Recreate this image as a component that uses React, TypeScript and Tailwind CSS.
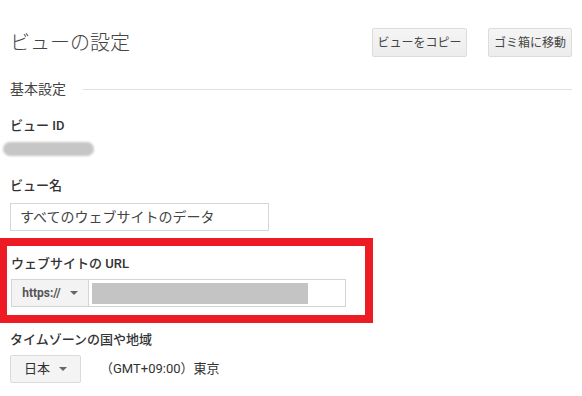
import React from "react"

const font = { fontFamily: 'Roboto, "Noto Sans CJK JP", sans-serif' }

function Caret() {
  return (
    <svg width="8" height="4" viewBox="0 0 8 4" className="ml-[9px]">
      <path d="M0 0 L8 0 L4 4 Z" fill="#666" />
    </svg>
  )
}

export default function App() {
  return (
    <div className="w-[582px] h-[396px] bg-white overflow-hidden text-[#333]" style={font}>
      {/* header */}
      <div className="flex items-center h-[29px] mt-[28px] pl-[10px] pr-[10px]">
        <h1 className="text-[20px] leading-none font-light text-[#444] flex-1">ビューの設定</h1>
        <button className="h-[29px] w-[95px] border border-[#dcdcdc] rounded-[2px] bg-gradient-to-b from-[#f5f5f5] to-[#ececec] text-[12px] text-[#444]">
          ビューをコピー
        </button>
        <button className="h-[29px] w-[84px] ml-[21px] border border-[#dcdcdc] rounded-[2px] bg-gradient-to-b from-[#f5f5f5] to-[#ececec] text-[12px] text-[#444]">
          ゴミ箱に移動
        </button>
      </div>

      {/* section heading */}
      <div className="flex items-center h-[16px] mt-[24px] pl-[10px] pr-[10px]">
        <span className="text-[14px] text-[#444] leading-none">基本設定</span>
        <div className="flex-1 h-px bg-[#e0e0e0] ml-[17px]" />
      </div>

      <div className="pl-[10px]">
        <div className="mt-[20px] h-[16px] flex items-center text-[13px] font-medium leading-none">ビュー ID</div>
        <div className="mt-[9px] -ml-[7px] h-[14px] w-[91px] rounded-full bg-[#c6c6c6] blur-[1px]" />

        <div className="mt-[21px] h-[16px] flex items-center text-[13px] font-medium leading-none">ビュー名</div>
        <div className="mt-[10px] h-[28px] w-[259px] border border-[#d6d6d6] flex items-center px-[9px] text-[14px] text-[#444]">
          すべてのウェブサイトのデータ
        </div>
      </div>

      {/* highlighted url block */}
      <div className="mt-[7px] w-[373px] h-[85px] border-[7px] border-t-[8px] border-r-[8px] border-b-[8px] border-[#ed1c24] pl-[4px]">
        <div className="mt-[9px] h-[16px] flex items-center text-[13px] font-medium leading-none">ウェブサイトの URL</div>
        <div className="mt-[8px] flex h-[28px] w-[335px] border border-[#d4d4d4]">
          <div className="w-[77px] h-full bg-[#f3f3f3] border-r border-[#d4d4d4] flex items-center justify-center text-[12px] font-bold text-[#555]">
            https://
            <Caret />
          </div>
          <div className="flex-1 flex items-center pl-[3px]">
            <div className="h-[21px] w-[216px] bg-[#c4c4c4]" />
          </div>
        </div>
      </div>

      <div className="pl-[10px]">
        <div className="mt-[8px] h-[16px] flex items-center text-[13px] font-medium leading-none">タイムゾーンの国や地域</div>
        <div className="mt-[8px] flex items-center">
          <div className="h-[28px] w-[71px] border border-[#dadada] rounded-[2px] bg-[#f4f4f4] flex items-center justify-center text-[13px] text-[#333]">
            日本
            <Caret />
          </div>
          <span className="ml-[19px] text-[13px] text-[#333]">（GMT+09:00）東京</span>
        </div>
      </div>
    </div>
  )
}
